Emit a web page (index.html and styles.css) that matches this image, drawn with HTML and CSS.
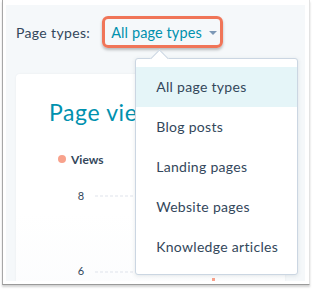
FILE: index.html
```html
<!DOCTYPE html>
<html>
<head>
<meta charset="utf-8">
<link rel="stylesheet" href="styles.css">
</head>
<body>
<div class="frame">
  <div class="panel">
    <div class="filter">
      <span class="filter-label">Page types:</span>
      <div class="toggle-wrap">
        <span class="toggle">All page types<span class="caret"></span></span>
        <div class="menu">
          <span class="menu-arrow"></span>
          <ul class="menu-list">
            <li class="menu-item is-selected">All page types</li>
            <li class="menu-item">Blog posts</li>
            <li class="menu-item">Landing pages</li>
            <li class="menu-item">Website pages</li>
            <li class="menu-item">Knowledge articles</li>
          </ul>
        </div>
      </div>
    </div>
    <div class="card">
      <h2 class="card-title">Page views</h2>
      <div class="legend"><span class="legend-dot"></span>Views</div>
      <svg class="chart" width="279" height="110" viewBox="0 0 279 110">
        <text x="65" y="19" class="axis-label" text-anchor="middle">8</text>
        <line x1="79" y1="15" x2="279" y2="15" class="grid"/>
        <text x="65" y="94" class="axis-label" text-anchor="middle">6</text>
        <line x1="79" y1="91" x2="279" y2="91" class="grid"/>
        <rect x="196" y="97" width="3" height="13" class="bar"/>
      </svg>
    </div>
  </div>
</div>
</body>
</html>
```
FILE: styles.css
```css
* { box-sizing: border-box; }
html, body { margin: 0; padding: 0; background: #fff; }
body {
  font-family: Lato, "Open Sans", sans-serif;
  color: #33475b;
  width: 312px;
  height: 289px;
  overflow: hidden;
}
.frame {
  margin-left: 2px;
  width: 308px;
  height: 285px;
  border-left: 1px solid #a7a7a7;
  border-right: 1px solid #e2e2e2;
  border-bottom: 1px solid #9a9a9a;
  box-shadow: 0 2px 2px rgba(0,0,0,0.18);
  padding: 5px 4px 3px 3px;
  background: #fff;
}
.panel {
  background: #f5f8fa;
  height: 100%;
  overflow: hidden;
  padding: 11px 10px 0 10px;
}
.filter {
  display: flex;
  align-items: center;
  height: 32px;
}
.filter-label {
  font-size: 14px;
  margin-right: 12px;
  letter-spacing: 0.35px;
}
.toggle-wrap { position: relative; }
.toggle {
  display: inline-flex;
  align-items: center;
  height: 32px;
  padding: 0 3px 0 6px;
  border: 3px solid #f07558;
  border-radius: 6px;
  box-shadow: 0 2px 3px rgba(0,0,0,0.25);
  color: #0091ae;
  font-size: 14.5px;
  letter-spacing: 0.1px;
}
.caret {
  display: inline-block;
  width: 0; height: 0;
  margin-left: 7px;
  margin-top: 2px;
  border-left: 4px solid transparent;
  border-right: 4px solid transparent;
  border-top: 4px solid #7c98b6;
}
.menu {
  position: absolute;
  left: 33px;
  top: 42px;
  width: 163px;
  height: 217px;
  background: #fff;
  border: 1px solid #cbd6e2;
  border-radius: 3px;
  box-shadow: 0 1px 4px rgba(45,62,80,0.12);
  z-index: 5;
}
.menu-arrow {
  position: absolute;
  left: 17px;
  top: -7px;
  width: 13px;
  height: 13px;
  background: #fff;
  border-left: 1px solid #cbd6e2;
  border-top: 1px solid #cbd6e2;
  transform: rotate(45deg);
}
.menu-list {
  list-style: none;
  margin: 0;
  padding: 8px 0;
  position: relative;
}
.menu-item {
  height: 40px;
  line-height: 40px;
  padding-left: 20px;
  font-size: 14px;
  color: #33475b;
  letter-spacing: 0.3px;
}
.menu-item.is-selected { background: #e5f5f8; }
.card {
  margin-top: 26px;
  margin-right: 10px;
  height: 230px;
  background: linear-gradient(180deg, #fff 0%, #fff 60%, #fbfcfd 100%);
  border-radius: 4px;
  box-shadow: 0 0 2px rgba(45,62,80,0.08);
  padding: 24px 0 0 33px;
}
.card-title {
  margin: 0;
  font-size: 23px;
  line-height: 28px;
  font-weight: 400;
  color: #0091ae;
  letter-spacing: 0.6px;
  white-space: nowrap;
}
.legend {
  display: flex;
  align-items: center;
  margin-top: 26px;
  margin-left: 9px;
  font-size: 12px;
  font-weight: 700;
  color: #33475b;
  height: 14px;
}
.legend-dot {
  width: 8px; height: 8px;
  border-radius: 50%;
  background: #f8a28c;
  margin-right: 5px;
}
.chart {
  display: block;
  margin-left: -33px;
  margin-top: 15px;
}
.axis-label {
  font-family: Lato, sans-serif;
  font-size: 11px;
  fill: #33475b;
}
.grid {
  stroke: #dfe3eb;
  stroke-width: 1;
  stroke-dasharray: 3 2;
}
.bar { fill: #f8a28c; }
```
